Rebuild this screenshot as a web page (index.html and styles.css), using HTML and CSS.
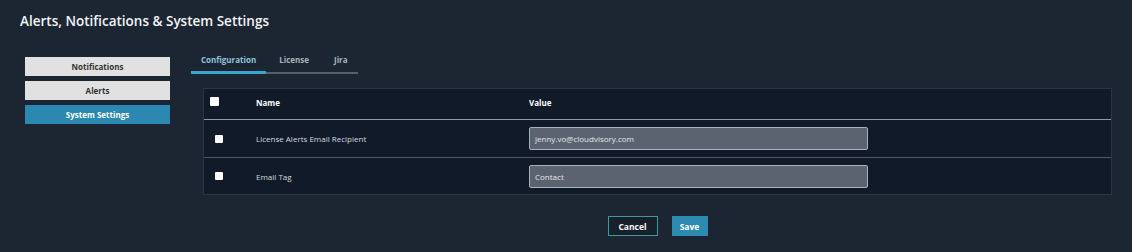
FILE: index.html
```html
<!DOCTYPE html>
<html lang="en">
<head>
    <meta charset="UTF-8">
    <meta name="viewport" content="width=device-width, initial-scale=1.0">
    <title>Alerts, Notifications &amp; System Settings</title>
    <link rel="stylesheet" href="styles.css">
</head>
<body>
    <h1 class="title">Alerts, Notifications &amp; System Settings</h1>
    <div class="layout">
        <div class="side">
            <button class="side-btn">Notifications</button>
            <button class="side-btn">Alerts</button>
            <button class="side-btn active">System Settings</button>
        </div>
        <div class="content">
            <div class="tabs">
                <div class="tab active">Configuration</div>
                <div class="tab">License</div>
                <div class="tab">Jira</div>
            </div>
            <div class="table">
                <div class="row head">
                    <div class="cell check"><span class="box big"></span></div>
                    <div class="cell name">Name</div>
                    <div class="cell value">Value</div>
                </div>
                <div class="row">
                    <div class="cell check"><span class="box"></span></div>
                    <div class="cell name">License Alerts Email Recipient</div>
                    <div class="cell value"><input class="field" type="text" value="jenny.vo@cloudvisory.com"></div>
                </div>
                <div class="row">
                    <div class="cell check"><span class="box"></span></div>
                    <div class="cell name">Email Tag</div>
                    <div class="cell value"><input class="field" type="text" value="Contact"></div>
                </div>
            </div>
            <div class="actions">
                <button class="btn cancel">Cancel</button>
                <button class="btn save">Save</button>
            </div>
        </div>
    </div>
</body>
</html>
```

FILE: styles.css
```css
* {
    margin: 0;
    padding: 0;
    box-sizing: border-box;
}
body {
    height: 252px;
    background: #1c2532;
    font-family: "Open Sans", "Liberation Sans", sans-serif;
    color: #fff;
    padding: 10px 20px 0 20px;
    overflow: hidden;
}
.title {
    font-size: 13.5px;
    font-weight: 600;
    line-height: 22px;
    color: #f2f4f6;
}
.layout {
    display: flex;
    margin-top: 17px;
    gap: 21px;
}
.side {
    display: flex;
    flex-direction: column;
    gap: 5px;
    width: 145px;
    margin: 8px 0 0 5px;
}
.side-btn {
    height: 19px;
    border: none;
    background: #e1e1e1;
    color: #333;
    font-family: inherit;
    font-size: 8px;
    font-weight: 700;
}
.side-btn.active {
    background: #2b88b0;
    color: #fff;
}
.content {
    flex: 1;
}
.tabs {
    display: flex;
    width: 167px;
    border-bottom: 2px solid #55606c;
    height: 25px;
}
.tab {
    font-size: 8px;
    font-weight: 700;
    color: #a9b3bd;
    padding: 5px 12px 0 12px;
    height: 25px;
}
.tab.active {
    color: #8fc3dc;
    padding: 5px 10px 0 10px;
    border-bottom: 3px solid #3aa6d0;
    margin-bottom: -2px;
}
.tab + .tab {
    padding-left: 13px;
}
.table {
    margin: 14px 0 0 12px;
    background: #111a29;
    border: 1px solid #2a3442;
}
.row {
    display: flex;
    align-items: center;
    height: 37px;
    border-top: 1px solid #4a5766;
}
.row.head {
    height: 31px;
    border-top: none;
    border-bottom: 1px solid #8e9aa6;
    align-items: flex-start;
}
.row.head + .row {
    border-top: none;
}
.cell {
    font-size: 8px;
    color: #d4d8de;
}
.head .cell {
    font-weight: 700;
    color: #fff;
    padding-top: 8px;
}
.check {
    width: 40px;
    padding-left: 11px;
}
.head .check {
    padding-left: 6px;
}
.name {
    width: 285px;
    padding-left: 12px;
}
.box {
    display: block;
    width: 8px;
    height: 8px;
    background: #fff;
    border-radius: 1px;
}
.box.big {
    width: 9px;
    height: 9px;
}
.field {
    width: 339px;
    height: 23px;
    background: #5b6370;
    border: 1px solid #a9b1ba;
    border-radius: 2px;
    color: #e4e6ea;
    font-family: inherit;
    font-size: 8px;
    padding: 0 5px;
}
.actions {
    display: flex;
    justify-content: center;
    gap: 14px;
    margin: 21px 0 0 12px;
}
.btn {
    height: 20px;
    font-family: inherit;
    font-size: 8.5px;
    font-weight: 700;
    color: #fff;
}
.cancel {
    width: 50px;
    background: #18202b;
    border: 1px solid #3c9a9c;
}
.save {
    width: 36px;
    background: #2d8ab1;
    border: none;
}
```
